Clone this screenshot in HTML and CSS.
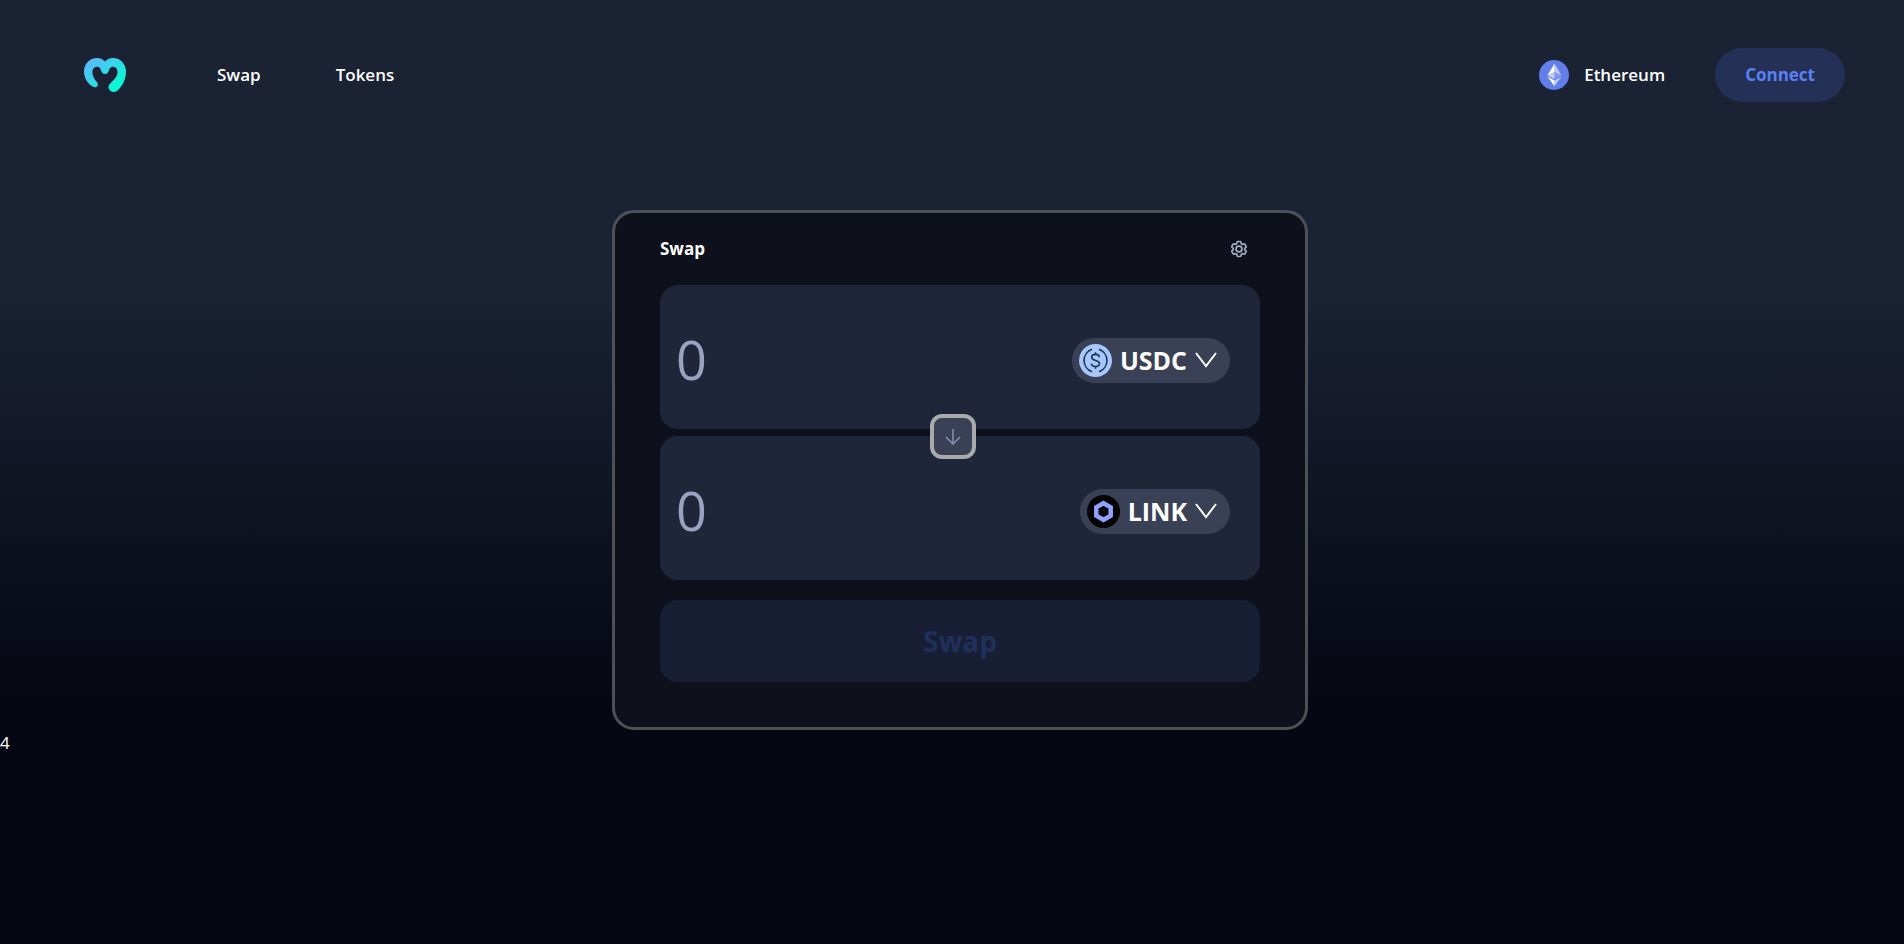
FILE: index.html
```
<!DOCTYPE html>
<html lang="en">
<head>
    <title>Swap</title>
    <meta charset="UTF-8">
    <link rel="stylesheet" href="styles.css">
</head>
<body>
    <header>
        <nav class="leftH">
            <a href="#" class="logo" aria-label="Home">
                <svg width="42" height="34" viewBox="0 0 42 34">
                    <defs>
                        <linearGradient id="logoFill" x1="0" y1="0" x2="1" y2="1">
                            <stop offset="0.1" stop-color="#5cb8ff"/>
                            <stop offset="0.9" stop-color="#00ffce"/>
                        </linearGradient>
                    </defs>
                    <path fill="url(#logoFill)" d="M21 3.4C18.800 1.200 16 0 13 0C5.500 0 0 6 0 13.500C0 20 3.500 25.600 9.200 28.800C11 29.800 13.200 29 13.700 27.400C14.200 26 13.600 25 12.600 23.800C10 20.800 8.400 17.500 8.400 14.300C8.400 11 10.400 8.800 13 8.800C16 8.800 16.600 11.400 17.600 13.700C18.400 15.300 19.600 16 21 16C22.400 16 23.600 15.300 24.400 13.700C25.400 11.400 26 8.800 29 8.800C31.600 8.800 33.500 11 33.500 14.300C33.500 18.200 30 22.200 26.200 25.400C24.600 26.800 24.200 28.200 24.700 30.200C25.700 34.200 31 35.300 34.200 32C39 27.200 42 20.500 42 13.500C42 6 36.500 0 29 0C26 0 23.200 1.200 21 3.400Z"/>
                </svg>
            </a>
            <a href="#" class="link">Swap</a>
            <a href="#" class="link">Tokens</a>
        </nav>
        <div class="rightH">
            <div class="headerItem">
                <svg class="eth" width="30" height="30" viewBox="0 0 32 32">
                    <circle cx="16" cy="16" r="16" fill="#627eea"/>
                    <g fill="#fff">
                        <path fill-opacity=".602" d="M16.498 4v8.870l7.497 3.350z"/>
                        <path d="M16.498 4L9 16.220l7.498-3.350z"/>
                        <path fill-opacity=".602" d="M16.498 21.968v6.027L24 17.616z"/>
                        <path d="M16.498 27.995v-6.028L9 17.616z"/>
                        <path fill-opacity=".2" d="M16.498 20.573l7.497-4.353-7.497-3.348z"/>
                        <path fill-opacity=".602" d="M9 16.220l7.498 4.353v-7.701z"/>
                    </g>
                </svg>
                Ethereum
            </div>
            <button type="button" class="connectButton">Connect</button>
        </div>
    </header>

    <main class="mainWindow">
        <div class="tradeBox">
            <div class="tradeBoxHeader">
                <h4>Swap</h4>
                <button type="button" class="cog" aria-label="Settings">
                    <svg width="20" height="20" viewBox="0 0 24 24" fill="none" stroke="currentColor" stroke-width="2" stroke-linejoin="round">
                        <path d="M9.594 3.940c.090-.542.560-.940 1.110-.940h2.593c.550 0 1.020.398 1.110.940l.213 1.281c.063.374.313.686.645.870.074.040.147.083.220.127.325.196.720.257 1.075.124l1.217-.456a1.125 1.125 0 0 1 1.370.490l1.296 2.247a1.125 1.125 0 0 1-.260 1.431l-1.003.827c-.293.241-.438.613-.430.992a7.723 7.723 0 0 1 0 .255c-.008.378.137.750.430.991l1.004.827c.424.350.534.955.260 1.430l-1.298 2.247a1.125 1.125 0 0 1-1.369.491l-1.217-.456c-.355-.133-.750-.072-1.076.124a6.470 6.470 0 0 1-.220.128c-.331.183-.581.495-.644.869l-.213 1.281c-.090.543-.560.940-1.110.940h-2.594c-.550 0-1.019-.398-1.110-.940l-.213-1.281c-.062-.374-.312-.686-.644-.870a6.520 6.520 0 0 1-.220-.127c-.325-.196-.720-.257-1.076-.124l-1.217.456a1.125 1.125 0 0 1-1.369-.490l-1.297-2.247a1.125 1.125 0 0 1 .260-1.431l1.004-.827c.292-.240.437-.613.430-.991a6.932 6.932 0 0 1 0-.255c.007-.380-.138-.751-.430-.992l-1.004-.827a1.125 1.125 0 0 1-.260-1.430l1.297-2.247a1.125 1.125 0 0 1 1.370-.491l1.216.456c.356.133.751.072 1.076-.124.072-.044.146-.086.220-.128.332-.183.582-.495.644-.869l.214-1.280Z"/>
                        <circle cx="12" cy="12" r="3.500"/>
                    </svg>
                </button>
            </div>

            <div class="inputs">
                <div class="field">
                    <input type="text" placeholder="0" aria-label="Amount to pay">
                    <button type="button" class="asset">
                        <svg width="33" height="33" viewBox="0 0 33 33" fill="none" stroke="#14384f" stroke-width="1.600">
                            <circle cx="16.500" cy="16.500" r="16.500" fill="#a9c6ff" stroke="none"/>
                            <path d="M13 5.200a12 12 0 0 0 0 22.600M20 5.200a12 12 0 0 1 0 22.600"/>
                            <path d="M20.300 13.300c0-1.800-1.500-2.900-3.800-2.900s-3.800 1.100-3.800 2.900c0 4.300 7.800 2 7.800 6.300 0 1.900-1.600 3-4 3s-4-1.100-4-3M16.500 8.200v2.200M16.500 22.600v2.200"/>
                        </svg>
                        USDC
                        <svg width="22" height="16" viewBox="0 0 22 16" fill="none" stroke="#fff" stroke-width="2">
                            <path d="M1 1l10 13L21 1"/>
                        </svg>
                    </button>
                </div>
                <div class="field">
                    <input type="text" placeholder="0" aria-label="Amount to receive" disabled>
                    <button type="button" class="asset">
                        <svg width="33" height="33" viewBox="0 0 33 33">
                            <circle cx="16.500" cy="16.500" r="16.500" fill="#000"/>
                            <path d="M16.500 8.200l7.200 4.100v8.400l-7.200 4.100-7.200-4.100v-8.400z" fill="none" stroke="#8fa2ff" stroke-width="4.500"/>
                        </svg>
                        LINK
                        <svg width="22" height="16" viewBox="0 0 22 16" fill="none" stroke="#fff" stroke-width="2">
                            <path d="M1 1l10 13L21 1"/>
                        </svg>
                    </button>
                </div>
                <button type="button" class="switchButton" aria-label="Switch tokens">
                    <svg width="16" height="16" viewBox="0 0 16 16" fill="none" stroke="currentColor" stroke-width="1.500">
                        <path d="M8 0v14.500M1 8l7 7 7-7"/>
                    </svg>
                </button>
            </div>

            <button type="button" class="swapButton" disabled>Swap</button>
        </div>
    </main>
    <div class="count">4</div>
</body>
</html>
```
FILE: styles.css
```
* {
    box-sizing: border-box;
}
body {
    margin: 0;
    min-height: 100vh;
    font-family: "Segoe UI", "Open Sans", sans-serif;
    font-size: 17px;
    line-height: 26px;
    color: #ffffff;
    background: linear-gradient(180deg, #1a2234 30%, #050712 75%) no-repeat #050712;
}
button, input {
    font-family: inherit;
    color: inherit;
    border: none;
    background: none;
    padding: 0;
}
button {
    cursor: pointer;
}
svg {
    display: block;
    flex-shrink: 0;
}
header {
    height: 150px;
    padding: 0 59px 0 84px;
    display: flex;
    align-items: center;
    justify-content: space-between;
    font-weight: 600;
}
.leftH, .rightH, .headerItem {
    display: flex;
    align-items: center;
}
.logo {
    margin-right: 91px;
}
.link {
    margin-right: 75px;
    color: #ffffff;
    text-decoration: none;
}
.rightH {
    gap: 50px;
}
.headerItem {
    gap: 15px;
}
.connectButton {
    padding: 14px 30px;
    border-radius: 27px;
    font-size: 17px;
    line-height: 26px;
    font-weight: 700;
    color: #5981f3;
    background-color: #243056;
}
.mainWindow {
    display: flex;
    justify-content: center;
    padding: 60px 0 0 16px;
}
.tradeBox {
    width: 696px;
    max-width: 100%;
    padding: 0 45px 45px;
    border: 3px solid #4f5055;
    border-radius: 22px;
    background-color: #0e111b;
}
.tradeBoxHeader {
    height: 72px;
    padding-right: 11px;
    display: flex;
    align-items: center;
    justify-content: space-between;
}
.tradeBoxHeader h4 {
    margin: 0;
    font-size: 17px;
    font-weight: 700;
}
.cog {
    color: #a9adc4;
}
.inputs {
    position: relative;
    display: flex;
    flex-direction: column;
    gap: 7px;
}
.field {
    height: 144px;
    padding: 6px 30px 0 16px;
    display: flex;
    align-items: center;
    border-radius: 18px;
    background-color: #1f2639;
}
.field input {
    flex: 1;
    min-width: 0;
    padding-bottom: 3px;
    font-size: 54px;
    outline: none;
}
.field input::placeholder {
    color: #9aa2c1;
    opacity: 1;
}
.asset {
    height: 45px;
    padding: 0 13px 0 7px;
    display: flex;
    align-items: center;
    gap: 8px;
    border-radius: 23px;
    font-size: 25px;
    font-weight: 700;
    background-color: #3a4157;
}
/* sits over the seam between the two fields */
.switchButton {
    position: absolute;
    top: 129px;
    left: calc(50% - 30px);
    width: 46px;
    height: 45px;
    display: flex;
    align-items: center;
    justify-content: center;
    border: 4px solid #a9abaa;
    border-radius: 12px;
    color: #8890b5;
    background-color: #3a4157;
}
.swapButton {
    display: block;
    width: 100%;
    height: 82px;
    margin-top: 20px;
    border-radius: 18px;
    font-size: 28px;
    font-weight: 700;
    color: #21305b;
    background-color: #181e33;
}
```
